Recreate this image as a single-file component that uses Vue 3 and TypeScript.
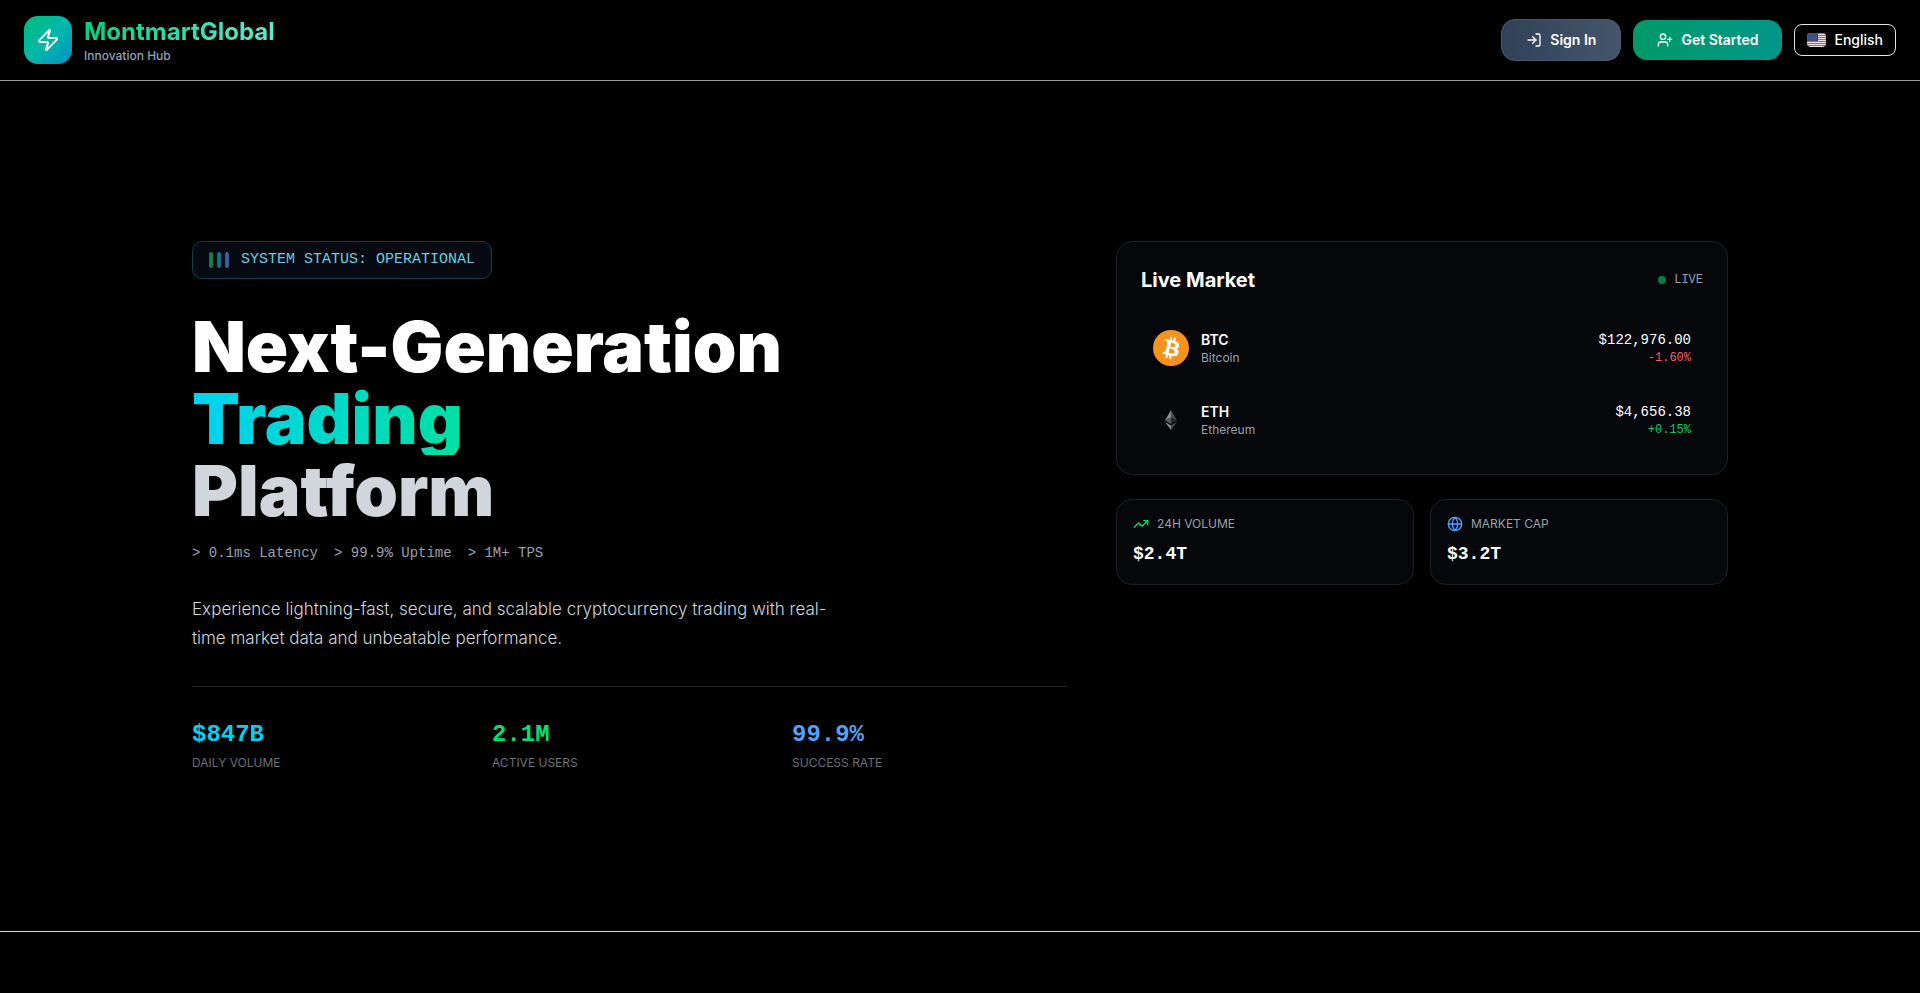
<script setup lang="ts">
interface Asset {
  symbol: string
  name: string
  price: string
  change: string
  up: boolean
}

const assets: Asset[] = [
  { symbol: 'BTC', name: 'Bitcoin', price: '$122,976.00', change: '-1.60%', up: false },
  { symbol: 'ETH', name: 'Ethereum', price: '$4,656.38', change: '+0.15%', up: true },
]

const stats = [
  { value: '$847B', label: 'Daily Volume', tone: 'cyan' },
  { value: '2.1M', label: 'Active Users', tone: 'green' },
  { value: '99.9%', label: 'Success Rate', tone: 'blue' },
]

const specs = ['> 0.1ms Latency', '> 99.9% Uptime', '> 1M+ TPS']

const stripes = [0, 2, 4, 6, 8, 10, 12]
const starRows = [1, 3, 5, 7]
const starColumns = [1, 3, 5, 7, 9]
</script>

<template>
  <div class="page">
    <header class="topbar">
      <a class="brand" href="#">
        <span class="brand-mark">
          <svg class="icon-lg" viewBox="0 0 24 24" aria-hidden="true">
            <path d="M4 14a1 1 0 0 1-.78-1.63l9.9-10.2a.5.5 0 0 1 .86.46l-1.92 6.02A1 1 0 0 0 13 10h7a1 1 0 0 1 .78 1.63l-9.9 10.2a.5.5 0 0 1-.86-.46l1.92-6.02A1 1 0 0 0 11 14z" />
          </svg>
        </span>
        <span class="brand-text">
          <span class="brand-name">MontmartGlobal</span>
          <span class="brand-sub">Innovation Hub</span>
        </span>
      </a>
      <nav class="actions">
        <button type="button" class="btn btn-signin">
          <svg class="icon" viewBox="0 0 24 24" aria-hidden="true">
            <path d="M15 3h4a2 2 0 0 1 2 2v14a2 2 0 0 1-2 2h-4" />
            <path d="m10 17 5-5-5-5" />
            <path d="M15 12H3" />
          </svg>
          Sign In
        </button>
        <button type="button" class="btn btn-start">
          <svg class="icon" viewBox="0 0 24 24" aria-hidden="true">
            <path d="M16 21v-2a4 4 0 0 0-4-4H6a4 4 0 0 0-4 4v2" />
            <circle cx="9" cy="7" r="4" />
            <path d="M19 8v6" />
            <path d="M22 11h-6" />
          </svg>
          Get Started
        </button>
        <button type="button" class="btn btn-lang">
          <svg class="flag" viewBox="0 0 19 14" aria-hidden="true">
            <rect width="19" height="14" fill="#f0dfe2" />
            <rect v-for="y in stripes" :key="y" :y="y" width="19" height="1" fill="#cc5763" />
            <rect width="11" height="8" fill="#34437a" />
            <template v-for="y in starRows" :key="y">
              <circle v-for="x in starColumns" :key="x" :cx="x" :cy="y" r=".4" fill="#aab2d0" />
            </template>
          </svg>
          English
        </button>
      </nav>
    </header>

    <main class="hero">
      <div class="hero-grid">
        <section class="intro">
          <div class="status">
            <span class="bars" aria-hidden="true"><i class="bar b1"></i><i class="bar b2"></i><i class="bar b3"></i></span>
            <span>SYSTEM STATUS: OPERATIONAL</span>
          </div>
          <h1 class="title">
            <span class="line">Next-Generation</span>
            <span class="line accent">Trading</span>
            <span class="line muted">Platform</span>
          </h1>
          <div class="specs">
            <span v-for="s in specs" :key="s">{{ s }}</span>
          </div>
          <p class="lead">
            Experience lightning-fast, secure, and scalable cryptocurrency trading with real-time market data and unbeatable performance.
          </p>
          <div class="stats">
            <div v-for="s in stats" :key="s.label">
              <div class="stat-value" :class="s.tone">{{ s.value }}</div>
              <div class="stat-label">{{ s.label }}</div>
            </div>
          </div>
        </section>

        <aside class="side">
          <section class="card market">
            <div class="market-head">
              <h2>Live Market</h2>
              <span class="live"><i class="dot"></i>LIVE</span>
            </div>
            <ul class="assets">
              <li v-for="a in assets" :key="a.symbol" class="asset">
                <svg v-if="a.symbol === 'BTC'" class="coin" viewBox="0 0 32 32" aria-hidden="true">
                  <circle cx="16" cy="16" r="16" fill="#f7931a" />
                  <path fill="#fff" d="M23.189 14.02c.314-2.096-1.283-3.223-3.465-3.975l.708-2.84-1.728-.43-.69 2.765c-.454-.114-.92-.22-1.385-.326l.695-2.783L15.596 6l-.708 2.839c-.376-.086-.746-.17-1.104-.26l.002-.009-2.384-.595-.46 1.846s1.283.294 1.256.312c.7.175.826.638.805 1.006l-.806 3.235c.048.012.11.03.18.057l-.183-.045-1.13 4.532c-.086.212-.303.531-.793.41.018.025-1.256-.313-1.256-.313l-.858 1.978 2.25.561c.418.105.828.215 1.231.318l-.715 2.872 1.727.43.708-2.84c.472.127.93.245 1.378.357l-.706 2.828 1.728.43.715-2.866c2.948.558 5.164.333 6.097-2.333.752-2.146-.037-3.385-1.588-4.192 1.13-.26 1.98-1.003 2.207-2.538zm-3.95 5.538c-.533 2.147-4.148.986-5.32.695l.95-3.805c1.172.293 4.929.872 4.37 3.11zm.535-5.569c-.487 1.953-3.495.96-4.47.717l.86-3.45c.975.243 4.118.696 3.61 2.733z" />
                </svg>
                <svg v-else class="coin" viewBox="0 0 36 36" aria-hidden="true">
                  <path fill="#8c8c8c" d="M18 8v7.500l-6 3z" />
                  <path fill="#4a4a4a" d="M18 8l6 10.500-6-3z" />
                  <path fill="#5a5a5a" d="M18 15.500V22l-6-3.500z" />
                  <path fill="#262626" d="M18 15.500l6 3-6 3.500z" />
                  <path fill="#8c8c8c" d="M12 20l6 3.500V28z" />
                  <path fill="#4a4a4a" d="M24 20l-6 3.500V28z" />
                </svg>
                <div class="asset-name">
                  <div class="symbol">{{ a.symbol }}</div>
                  <div class="name">{{ a.name }}</div>
                </div>
                <div class="asset-price">
                  <div class="price">{{ a.price }}</div>
                  <div class="change" :class="a.up ? 'up' : 'down'">{{ a.change }}</div>
                </div>
              </li>
            </ul>
          </section>
          <div class="minis">
            <section class="card mini">
              <div class="mini-label">
                <svg class="icon green" viewBox="0 0 24 24" aria-hidden="true">
                  <path d="m22 7-8.500 8.500-5-5L2 17" />
                  <path d="M16 7h6v6" />
                </svg>
                24H VOLUME
              </div>
              <div class="mini-value">$2.4T</div>
            </section>
            <section class="card mini">
              <div class="mini-label">
                <svg class="icon blue" viewBox="0 0 24 24" aria-hidden="true">
                  <circle cx="12" cy="12" r="10" />
                  <path d="M12 2a14.500 14.500 0 0 0 0 20 14.500 14.500 0 0 0 0-20" />
                  <path d="M2 12h20" />
                </svg>
                MARKET CAP
              </div>
              <div class="mini-value">$3.2T</div>
            </section>
          </div>
        </aside>
      </div>
    </main>
    <div class="next"></div>
  </div>
</template>

<style>
body {
  margin: 0;
  background: #000;
}
</style>

<style scoped>
.page {
  min-height: 100vh;
  background: #000;
  color: #fff;
  font-family: Inter, "Liberation Sans", sans-serif;
  font-size: 14px;
  line-height: 20px;
  overflow: hidden;
}
.topbar {
  display: flex;
  align-items: center;
  justify-content: space-between;
  padding: 16px 24px;
  border-bottom: 1px solid #9c9c9c;
}
.brand {
  display: flex;
  align-items: center;
  gap: 12px;
  color: inherit;
  text-decoration: none;
}
.brand-mark {
  display: flex;
  align-items: center;
  justify-content: center;
  width: 48px;
  height: 48px;
  border-radius: 14px;
  background: linear-gradient(135deg, #00bc7d, #00b8a8 50%, #0092c8);
}
.brand-text {
  display: flex;
  flex-direction: column;
}
.brand-name {
  font-size: 24px;
  line-height: 32px;
  font-weight: 700;
  background: linear-gradient(90deg, #00d084, #5eead4);
  background-clip: text;
  color: transparent;
}
.brand-sub {
  font-size: 12px;
  line-height: 16px;
  font-weight: 500;
  color: #90a1b9;
}
svg {
  flex: none;
}
.icon,
.icon-lg {
  width: 16px;
  height: 16px;
  fill: none;
  stroke: currentColor;
  stroke-width: 2;
  stroke-linecap: round;
  stroke-linejoin: round;
}
.icon-lg {
  width: 24px;
  height: 24px;
}
.actions {
  display: flex;
  align-items: center;
  gap: 12px;
}
.btn {
  display: flex;
  align-items: center;
  margin: 0;
  border: 0;
  color: #fff;
  font: 600 14px/20px Inter, "Liberation Sans", sans-serif;
  cursor: pointer;
}
.btn-signin {
  gap: 8px;
  padding: 10px 24px;
  border: 1px solid #4d5b70;
  border-radius: 14px;
  background: linear-gradient(90deg, #314158, #45556c);
}
.btn-start {
  gap: 8px;
  padding: 10px 24px;
  border-radius: 14px;
  background: linear-gradient(90deg, #009966, #009689);
}
.btn-lang {
  gap: 8px;
  padding: 5px 12px;
  border: 1px solid #e5e5e5;
  border-radius: 8px;
  background: #000;
  font-weight: 500;
}
.flag {
  width: 19px;
  height: 14px;
  border-radius: 4px;
}
.hero {
  padding: 160px 24px;
  border-bottom: 1px solid #d8d8d8;
}
.hero-grid {
  display: grid;
  grid-template-columns: repeat(12, minmax(0, 1fr));
  gap: 48px;
  max-width: 1536px;
  margin: 0 auto;
}
.intro {
  grid-column: span 7;
}
.side {
  grid-column: span 5;
  display: flex;
  flex-direction: column;
  gap: 24px;
}
.status,
.specs,
.stat-value,
.live,
.asset-price,
.mini-value {
  font-family: "Liberation Mono", monospace;
}
.status {
  display: inline-flex;
  align-items: center;
  gap: 12px;
  padding: 8px 16px;
  border: 1px solid #123f45;
  border-radius: 10px;
  background: #070a12;
  color: #60cfe0;
  font-size: 15px;
  vertical-align: top;
}
.bars {
  display: flex;
  gap: 4px;
}
.bar {
  width: 4px;
  height: 16px;
  border-radius: 2px;
}
.b1 { background: #128048; }
.b2 { background: #0e7288; }
.b3 { background: #365f9c; }
.title {
  margin: 32px 0 16px;
  font-size: 70px;
  line-height: 72px;
  font-weight: 900;
}
.line {
  display: block;
}
.accent {
  width: fit-content;
  background: linear-gradient(90deg, #00d3f2, #00dfa2);
  background-clip: text;
  color: transparent;
}
.muted {
  color: #d1d5dc;
}
.specs {
  display: flex;
  gap: 16px;
  color: #99a1af;
}
.lead {
  max-width: 656px;
  margin: 32px 0 33px;
  font-size: 17px;
  line-height: 29px;
  font-weight: 300;
  color: #d1d5dc;
}
.stats {
  display: grid;
  grid-template-columns: repeat(3, 1fr);
  gap: 24px;
  padding-top: 32px;
  border-top: 1px solid #222;
}
.stat-value {
  font-size: 24px;
  line-height: 32px;
  font-weight: 700;
}
.stat-label {
  margin-top: 4px;
  font-size: 12px;
  line-height: 16px;
  text-transform: uppercase;
  color: #6b6f77;
}
.cyan { color: #00d3f2; }
.green { color: #05df72; }
.blue { color: #51a2ff; }
.card {
  border: 1px solid #1d2024;
  border-radius: 16px;
  background: #05070b;
}
.market {
  padding: 24px;
}
.market-head {
  display: flex;
  align-items: center;
  justify-content: space-between;
}
h2 {
  margin: 0;
  font-size: 20px;
  line-height: 28px;
  font-weight: 700;
}
.live {
  display: flex;
  align-items: center;
  gap: 8px;
  font-size: 12px;
  line-height: 16px;
  color: #99a1af;
}
.dot {
  width: 8px;
  height: 8px;
  border-radius: 50%;
  background: #077c47;
}
.assets {
  display: grid;
  gap: 12px;
  margin: 24px 0 0;
  padding: 0;
  list-style: none;
}
.asset {
  display: flex;
  align-items: center;
  gap: 12px;
  padding: 12px;
}
.coin {
  width: 36px;
  height: 36px;
}
.symbol {
  font-weight: 600;
}
.name {
  font-size: 12px;
  line-height: 16px;
  color: #99a1af;
}
.asset-price {
  margin-left: auto;
  text-align: right;
}
.change {
  font-size: 12px;
  line-height: 16px;
}
.up { color: #05c968; }
.down { color: #f0616a; }
.minis {
  display: grid;
  grid-template-columns: 1fr 1fr;
  gap: 16px;
}
.mini {
  padding: 16px;
}
.mini-label {
  display: flex;
  align-items: center;
  gap: 8px;
  margin-bottom: 8px;
  font-size: 12px;
  line-height: 16px;
  color: #99a1af;
}
.mini-value {
  font-size: 18px;
  line-height: 28px;
  font-weight: 700;
}
.next {
  height: 61px;
}
</style>
